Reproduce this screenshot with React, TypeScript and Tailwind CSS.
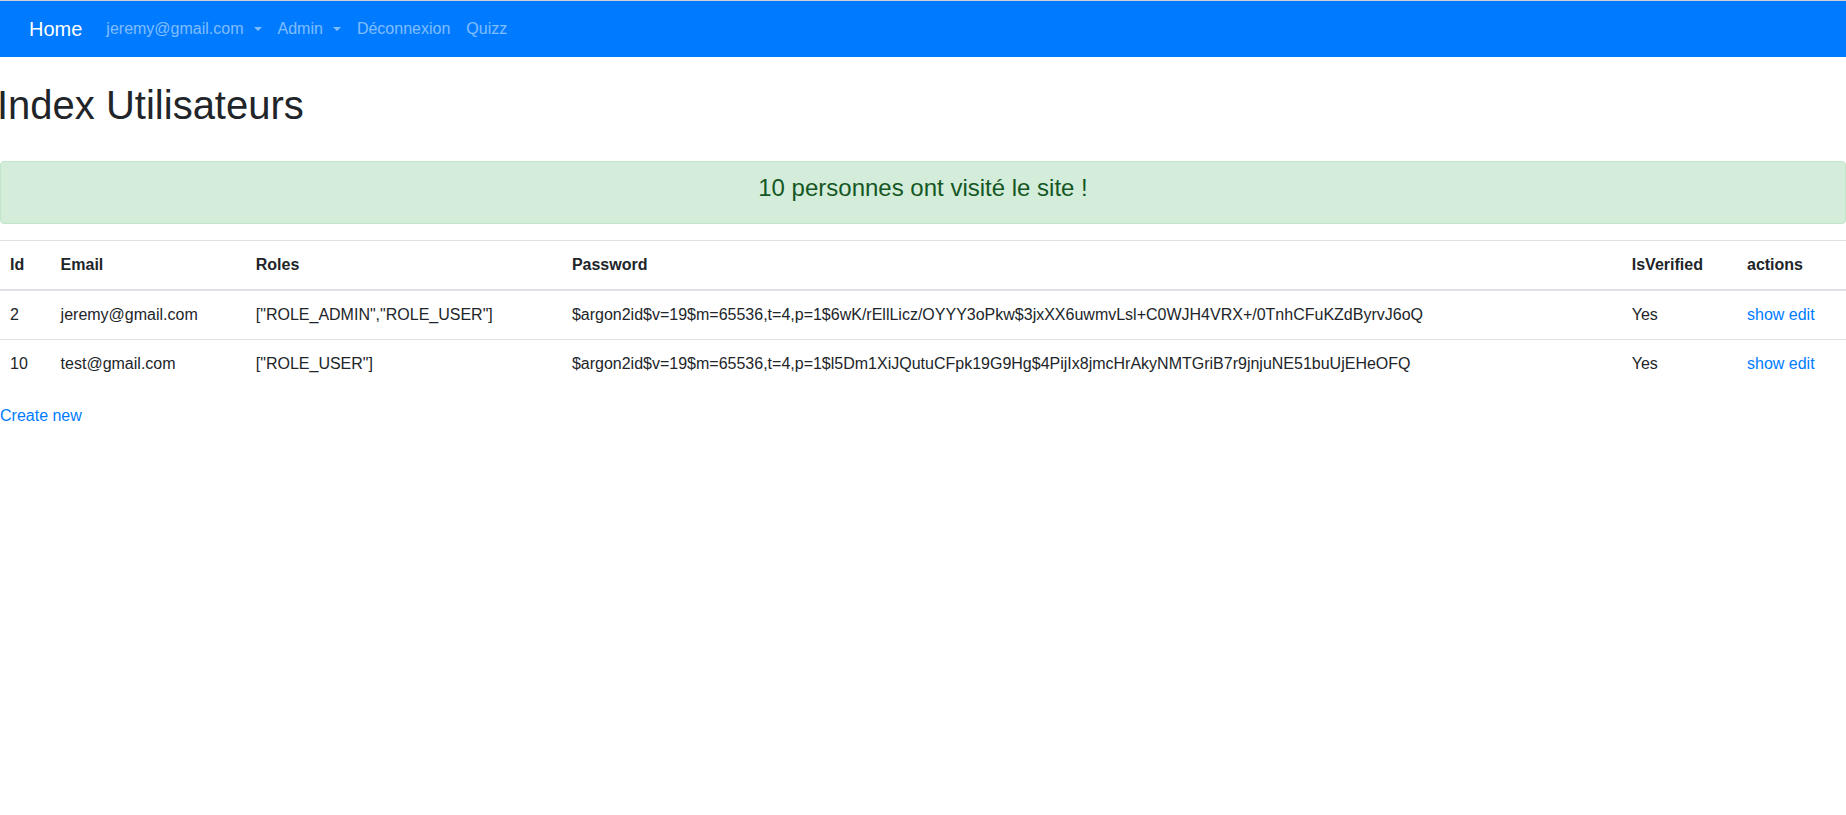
import React from "react";

const users = [
  {
    id: 2,
    email: "jeremy@gmail.com",
    roles: '["ROLE_ADMIN","ROLE_USER"]',
    password:
      "$argon2id$v=19$m=65536,t=4,p=1$6wK/rEllLicz/OYYY3oPkw$3jxXX6uwmvLsl+C0WJH4VRX+/0TnhCFuKZdByrvJ6oQ",
    verified: "Yes",
  },
  {
    id: 10,
    email: "test@gmail.com",
    roles: '["ROLE_USER"]',
    password:
      "$argon2id$v=19$m=65536,t=4,p=1$l5Dm1XiJQutuCFpk19G9Hg$4PijIx8jmcHrAkyNMTGriB7r9jnjuNE51buUjEHeOFQ",
    verified: "Yes",
  },
];

function Caret() {
  return (
    <span className="ml-[10px] inline-block align-[4px] border-t-[4.8px] border-x-[4.8px] border-t-current border-x-transparent w-0 h-0" />
  );
}

export default function App() {
  return (
    <div className="min-h-[815px] overflow-hidden bg-white text-[#212529] text-[16px] leading-6 font-['Liberation_Sans',Arial,sans-serif]">
      <div className="h-px bg-[#d0d0d0]" />
      {/* Navbar */}
      <nav className="bg-[#007bff] h-14 flex items-center pl-[29px] pr-4">
        <a href="#" className="text-white text-[20px] leading-[30px] mr-4">
          Home
        </a>
        <ul className="flex items-center">
          <li>
            <a href="#" className="px-2 text-white/50 flex items-center">
              jeremy@gmail.com
              <Caret />
            </a>
          </li>
          <li>
            <a href="#" className="px-2 text-white/50 flex items-center">
              Admin
              <Caret />
            </a>
          </li>
          <li>
            <a href="#" className="block px-2 text-white/50">
              Déconnexion
            </a>
          </li>
          <li>
            <a href="#" className="block px-2 text-white/50">
              Quizz
            </a>
          </li>
        </ul>
      </nav>

      <h1 className="mt-6 mb-8 -ml-[3px] text-[40px] leading-[48px] font-normal">Index Utilisateurs</h1>

      <div className="mb-4 border border-[#c3e6cb] bg-[#d4edda] text-[#155724] rounded px-5 py-3 text-center">
        <h4 className="text-[24px] leading-[28.8px] font-normal mb-2">10 personnes ont visité le site !</h4>
      </div>

      <table className="w-[calc(100%+2px)] -ml-[2px] mb-4">
        <thead>
          <tr>
            {["Id", "Email", "Roles", "Password", "IsVerified", "actions"].map((h) => (
              <th
                key={h}
                className="text-left align-bottom font-bold px-3 py-3 border-t border-b-2 border-[#dee2e6]"
              >
                {h}
              </th>
            ))}
          </tr>
        </thead>
        <tbody>
          {users.map((u) => (
            <tr key={u.id}>
              <td className="px-3 py-3 border-t border-[#dee2e6] align-top">{u.id}</td>
              <td className="px-3 py-3 border-t border-[#dee2e6] align-top">{u.email}</td>
              <td className="px-3 py-3 border-t border-[#dee2e6] align-top">{u.roles}</td>
              <td className="px-3 py-3 border-t border-[#dee2e6] align-top">{u.password}</td>
              <td className="px-3 py-3 border-t border-[#dee2e6] align-top">{u.verified}</td>
              <td className="px-3 py-3 border-t border-[#dee2e6] align-top">
                <a href="#" className="text-[#007bff]">show</a>{" "}
                <a href="#" className="text-[#007bff]">edit</a>
              </td>
            </tr>
          ))}
        </tbody>
      </table>

      <a href="#" className="text-[#007bff]">
        Create new
      </a>
    </div>
  );
}
